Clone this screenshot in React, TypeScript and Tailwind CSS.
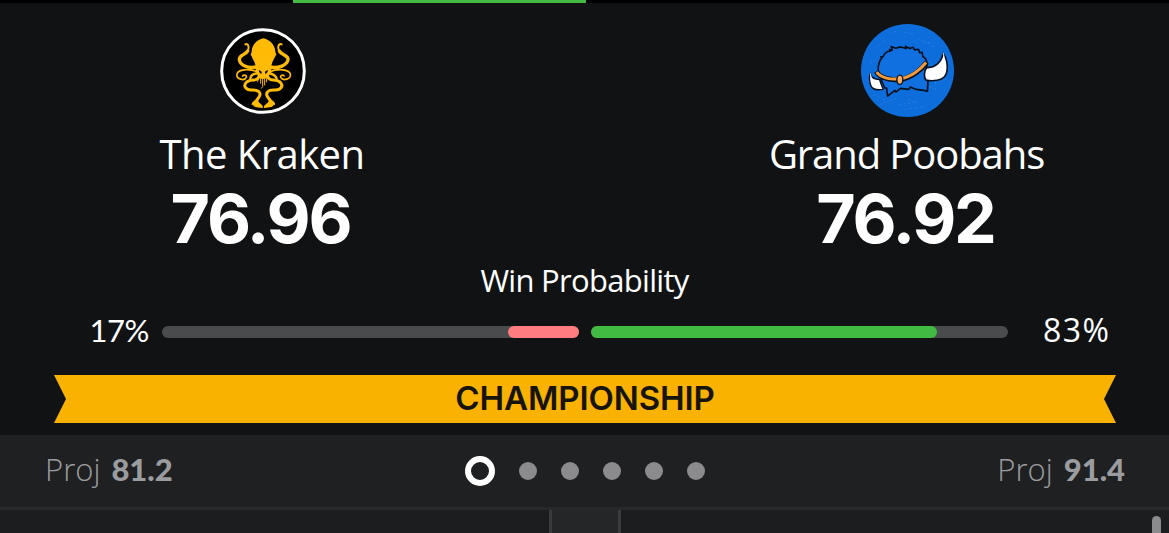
const sans = "font-['Open_Sans','Noto_Sans',sans-serif]";
const digits = "font-['Inter','Liberation_Sans',sans-serif]";
const figures = "font-['Lato','Open_Sans',sans-serif]";

function KrakenLogo() {
    return (
        <svg viewBox="29 22 258 258" className="ml-[2px] w-[86px] h-[86px]">
            <circle cx="158" cy="151" r="124" fill="#000" stroke="#fff" strokeWidth="9" />
            <g fill="none" stroke="#ffbb05" strokeLinecap="round" strokeLinejoin="round">
                {/* upper arms */}
                <path d="M137 139 C112 144 89 134 87 117 C85 103 106 103 112 91" strokeWidth="10" />
                <path d="M112 91 C119 79 112 67 105 71" strokeWidth="6" />
                <path d="M179 139 C204 144 231 134 233 117 C235 103 212 103 207 91" strokeWidth="10" />
                <path d="M207 91 C199 79 206 67 214 71" strokeWidth="6" />
                {/* side curls */}
                <path d="M141 153 C115 143 83 146 80 160 C77 176 102 182 108 170 C110 163 100 162 97 166" strokeWidth="5" />
                <path d="M178 153 C203 143 236 146 240 160 C243 176 218 182 211 170 C209 163 219 162 221 166" strokeWidth="5" />
                <path d="M144 157 C125 160 122 165 120 173" strokeWidth="7" />
                <path d="M174 157 C192 160 196 165 199 173" strokeWidth="7" />
                {/* lower arms */}
                <path d="M148 163 C140 187 125 172 109 184 C96 196 108 209 124 208 C145 206 154 217 146 229 L135 245" strokeWidth="9" />
                <path d="M170 163 C178 187 193 172 209 184 C222 196 210 209 194 208 C173 206 164 217 172 229 L184 245" strokeWidth="9" />
                {/* beard */}
                <path d="M151 171 V188 M157 172 V198 L153 203 M163 172 V193 M169 170 V184 M146 168 L142 182" strokeWidth="3" />
            </g>
            <g fill="#ffbb05">
                <path d="M159 53 C143 55 124 72 124 93 L121 102 L124 107 C128 119 137 126 136 145 C136 160 146 174 158 175 C171 175 183 160 183 145 C182 126 190 119 195 107 L198 102 L195 93 C195 72 175 55 159 53Z" />
                <path d="M142 233 C134 239 122 244 124 253 L128 252 L130 256 C136 261 145 260 159 262 C159 253 150 250 145 244Z" />
                <path d="M176 233 C184 239 197 244 194 253 L190 252 L188 256 C182 261 174 260 160 262 C160 253 169 250 174 244Z" />
            </g>
            <path d="M145 147 L154 153 L153 161 L147 155Z M173 147 L164 153 L165 161 L171 155Z" fill="#000" />
            <path d="M159 232 V263" stroke="#000" strokeWidth="3" />
        </svg>
    );
}

function PoobahLogo() {
    return (
        <svg viewBox="17 17 280 280" className="w-[93px] h-[93px]">
            <circle cx="157" cy="157" r="140" fill="#0d6edb" />
            {/* worn texture */}
            <g stroke="#5b9ee8" strokeWidth="3" opacity=".6" strokeDasharray="3 7 1 5">
                <path d="M60 90 L90 65 M150 42 L180 48 M190 62 L240 86 M205 75 L235 72 M46 132 L62 126 M55 230 L90 247 M75 258 L122 242 M130 260 L190 251 M150 274 L210 265 M160 244 L185 253 M225 207 L255 218 M240 195 L272 182 M104 45 L126 38" />
            </g>
            <path
                d="M69 158 C67 142 74 125 80 119 L77 116 L84 115 C88 104 97 99 105 99 L103 94 L111 96 L108 85 L121 90 L137 86 L153 91 L151 84 L164 91 L174 87 L178 95 L190 93 L193 103 L201 102 L203 115 C211 119 215 127 216 137 L211 182 L219 184 L217 219 L201 216 L183 214 L166 207 L160 214 L136 211 L122 222 L119 217 L97 234 L94 210 L88 209 L79 187Z"
                fill="#1170df"
                stroke="#07111f"
                strokeWidth="5"
                strokeLinejoin="round"
            />
            <path d="M63 160 C76 181 107 187 132 184 C170 180 200 153 215 132" fill="none" stroke="#07111f" strokeWidth="15" />
            <path d="M64 162 C78 180 107 185 132 182 C167 178 197 153 213 133" fill="none" stroke="#f29b3c" strokeWidth="9" />
            <ellipse cx="134" cy="185" rx="9" ry="14" fill="#f8ad63" stroke="#07111f" strokeWidth="4" />
            <path d="M264 105 C279 125 280 156 271 172 C263 188 231 190 213 186 C205 178 207 158 215 148 C238 150 260 134 264 105Z" fill="#fff" stroke="#07111f" strokeWidth="5" strokeLinejoin="round" />
            <path d="M45 166 C49 182 62 184 73 184 C76 196 81 206 84 214 C68 216 52 217 47 203 C42 190 41 177 45 166Z" fill="#fff" stroke="#07111f" strokeWidth="4" strokeLinejoin="round" />
            <path d="M264 104 C267 112 268 118 265 126 M45 166 L48 179" fill="none" stroke="#fff" strokeWidth="3" />
        </svg>
    );
}

interface TeamProps {
    logo: React.ReactNode;
    name: string;
    nameClass: string;
    score: string;
}

function Team({ logo, name, nameClass, score }: TeamProps) {
    return (
        <div className="w-[524px] flex flex-col items-center text-white">
            <div className="h-[93px] flex items-center">{logo}</div>
            <h2 className={`${sans} mt-[11px] h-[52px] text-[40px] leading-[52px] whitespace-nowrap ${nameClass}`}>{name}</h2>
            <p className={`${digits} h-[76px] pr-[3px] text-[68px] leading-[76px] font-bold tracking-[-2.2px]`}>{score}</p>
        </div>
    );
}

function Projection({ value, valueClass }: { value: string; valueClass: string }) {
    return (
        <p className="mb-[4px] flex items-baseline gap-[11px] text-[#9b9c9f] leading-[40px]">
            <span className={`${sans} text-[31px] font-light`}>Proj</span>
            <span className={`${figures} text-[31px] font-black ${valueClass}`}>{value}</span>
        </p>
    );
}

export default function App() {
    return (
        <div className="w-[1169px] h-[533px] overflow-hidden bg-[#111214] flex flex-col">
            <div className="h-[3px] shrink-0 bg-black flex">
                <div className="ml-[293px] w-[293px] bg-[#41bb42]" />
            </div>

            <main className="h-[432px] shrink-0 pt-[21px] flex flex-col">
                <div className="flex justify-between">
                    <Team logo={<KrakenLogo />} name="The Kraken" nameClass="tracking-[-0.55px]" score="76.96" />
                    <Team logo={<PoobahLogo />} name="Grand Poobahs" nameClass="pr-px tracking-[-1.1px]" score="76.92" />
                </div>

                <h3 className={`${sans} mt-[4px] h-[40px] text-[31px] leading-[40px] tracking-[-0.7px] text-center text-white`}>Win Probability</h3>

                {/* probability bars grow outward from the middle */}
                <div className="mt-[12px] h-[40px] px-[60px] flex items-center justify-between text-white">
                    <span className={`${figures} mb-[4px] w-[89px] text-right text-[31px] leading-[40px] tracking-[-0.4px]`}>17%</span>
                    <div className="ml-[13px] w-[417px] h-[12px] rounded-full bg-[#4a4b4d] flex justify-end">
                        <div className="w-[71px] rounded-full bg-[#ff7c80]" />
                    </div>
                    <div className="ml-[12px] w-[417px] h-[12px] rounded-full bg-[#4a4b4d] flex">
                        <div className="w-[346px] rounded-full bg-[#41bb42]" />
                    </div>
                    <span className={`${sans} mb-[4px] w-[101px] pl-[35px] text-[32px] leading-[40px] tracking-[1.4px]`}>83%</span>
                </div>

                <div className="mt-[23px] mx-[54px] w-[1062px] h-[48px] bg-[#f9b200] [clip-path:polygon(0_0,100%_0,1050px_50%,100%_100%,0_100%,12px_50%)] flex items-center justify-center">
                    <span className={`${digits} mb-[2px] text-[33px] leading-[48px] font-semibold tracking-[-0.1px] text-[#16140c]`}>CHAMPIONSHIP</span>
                </div>
            </main>

            <footer className="h-[72px] shrink-0 pl-[45px] pr-[44px] bg-[#1f2022] flex items-center justify-between">
                <Projection value="81.2" valueClass="tracking-[0px]" />
                <div className="flex items-center gap-6">
                    <span className="size-[30px] rounded-full border-[6px] border-white" />
                    {[1, 2, 3, 4, 5].map((page) => (
                        <span key={page} className="size-[18px] rounded-full bg-[#8b8b8d]" />
                    ))}
                </div>
                <Projection value="91.4" valueClass="tracking-[0px]" />
            </footer>

            <div className="h-[26px] shrink-0 border-t-[3px] border-[#28292b] bg-[#1c1d1f] flex">
                <div className="ml-[549px] w-[72px] border-x-[3px] border-[#3a3b3d] bg-[#252628]" />
                <div className="ml-auto mr-[8px] mt-[6px] w-[9px] h-[17px] rounded-t-full bg-[#8b8b8d]" />
            </div>
        </div>
    );
}
